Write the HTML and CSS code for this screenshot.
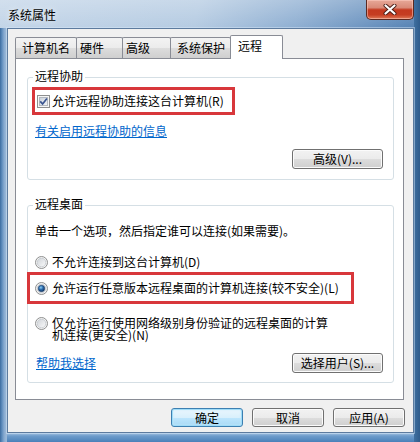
FILE: index.html
```html
<!DOCTYPE html>
<html lang="zh-CN">
<head>
<meta charset="utf-8">
<title>系统属性</title>
<link rel="stylesheet" href="styles.css">
</head>
<body>
<div class="window">
  <div class="titlebar">
    <span class="title">系统属性</span>
    <div class="close">
      <svg width="14" height="11" viewBox="0 0 14 11">
        <path d="M2.5 1.5 L11.5 9.5 M11.5 1.5 L2.5 9.5" stroke="#4a1c14" stroke-width="4" stroke-linecap="round" fill="none"/>
        <path d="M2.5 1.5 L11.5 9.5 M11.5 1.5 L2.5 9.5" stroke="#ffffff" stroke-width="2.2" stroke-linecap="round" fill="none"/>
      </svg>
    </div>
  </div>
  <div class="client">
    <div class="tabs">
      <div class="tab t1">计算机名</div>
      <div class="tab t2">硬件</div>
      <div class="tab t3">高级</div>
      <div class="tab t4">系统保护</div>
      <div class="tab t5 active">远程</div>
    </div>
    <div class="panel">
      <div class="group g1">
        <div class="legend">远程协助</div>
        <div class="mark mark1">
          <svg class="cb" width="13" height="13" viewBox="0 0 13 13">
            <defs>
              <linearGradient id="cbg" x1="0" y1="0" x2="1" y2="1">
                <stop offset="0" stop-color="#c9d0da"/>
                <stop offset="1" stop-color="#f4f6f8"/>
              </linearGradient>
            </defs>
            <rect x="0.5" y="0.5" width="12" height="12" fill="#f6f6f6" stroke="#8e8f8f"/>
            <rect x="2.5" y="2.5" width="8" height="8" fill="url(#cbg)" stroke="#b3b8bf"/>
            <path d="M3.2 6.4 L5.6 8.9 L9.9 3.4" fill="none" stroke="#3b5590" stroke-width="1.7"/>
          </svg>
          <span class="label">允许远程协助连接这台计算机(R)</span>
        </div>
        <a class="link link1" href="#">有关启用远程协助的信息</a>
        <div class="btn btn-side btn-adv">高级(V)...</div>
      </div>
      <div class="group g2">
        <div class="legend">远程桌面</div>
        <div class="desc">单击一个选项，然后指定谁可以连接(如果需要)。</div>
        <div class="opt opt1">
          <svg class="rd" width="13" height="13" viewBox="0 0 13 13">
            <defs>
              <linearGradient id="rg1" x1="0" y1="0" x2="1" y2="1">
                <stop offset="0" stop-color="#cfd3d8"/>
                <stop offset="1" stop-color="#fbfbfb"/>
              </linearGradient>
            </defs>
            <circle cx="6.5" cy="6.5" r="6" fill="#f4f4f4" stroke="#8e8f8f"/>
            <circle cx="6.5" cy="6.5" r="4.3" fill="url(#rg1)" stroke="#c2c6cb" stroke-width="0.8"/>
          </svg>
          <span class="label">不允许连接到这台计算机(D)</span>
        </div>
        <div class="mark mark2">
          <svg class="rd" width="13" height="13" viewBox="0 0 13 13">
            <defs>
              <linearGradient id="rg2" x1="0" y1="0" x2="1" y2="1">
                <stop offset="0" stop-color="#cfd3d8"/>
                <stop offset="1" stop-color="#fbfbfb"/>
              </linearGradient>
              <radialGradient id="dot" cx="0.4" cy="0.35" r="0.7">
                <stop offset="0" stop-color="#8fd0f5"/>
                <stop offset="0.45" stop-color="#2f6fb0"/>
                <stop offset="1" stop-color="#0e2f5c"/>
              </radialGradient>
            </defs>
            <circle cx="6.5" cy="6.5" r="6" fill="#f4f4f4" stroke="#8e8f8f"/>
            <circle cx="6.5" cy="6.5" r="4.3" fill="url(#rg2)" stroke="#c2c6cb" stroke-width="0.8"/>
            <circle cx="6.5" cy="6.5" r="3.2" fill="url(#dot)" stroke="#1b3e6a" stroke-width="0.6"/>
          </svg>
          <span class="label">允许运行任意版本远程桌面的计算机连接(较不安全)(L)</span>
        </div>
        <div class="opt opt3">
          <svg class="rd" width="13" height="13" viewBox="0 0 13 13">
            <defs>
              <linearGradient id="rg3" x1="0" y1="0" x2="1" y2="1">
                <stop offset="0" stop-color="#cfd3d8"/>
                <stop offset="1" stop-color="#fbfbfb"/>
              </linearGradient>
            </defs>
            <circle cx="6.5" cy="6.5" r="6" fill="#f4f4f4" stroke="#8e8f8f"/>
            <circle cx="6.5" cy="6.5" r="4.3" fill="url(#rg3)" stroke="#c2c6cb" stroke-width="0.8"/>
          </svg>
          <span class="label wrap">仅允许运行使用网络级别身份验证的远程桌面的计算机连接(更安全)(N)</span>
        </div>
        <div class="bottomrow">
          <a class="link link2" href="#">帮助我选择</a>
          <div class="btn btn-side btn-users">选择用户(S)...</div>
        </div>
      </div>
    </div>
    <div class="footer">
      <div class="btn btn-foot btn-default">确定</div>
      <div class="btn btn-foot">取消</div>
      <div class="btn btn-foot">应用(A)</div>
    </div>
  </div>
</div>
</body>
</html>
```
FILE: styles.css
```css
html, body {
  margin: 0;
  padding: 0;
}

body {
  font-family: "Noto Sans CJK SC", "Noto Sans", sans-serif;
  font-size: 12px;
  color: #000;
  width: 420px;
  height: 442px;
  overflow: hidden;
}

.window {
  box-sizing: border-box;
  width: 420px;
  height: 442px;
  padding: 0 6px 9px 7px;
  display: flex;
  flex-direction: column;
  background:
    linear-gradient(90deg, #3c6c9f 0, #5f8dbd 2px, #86a9cf 4px, #9ab8d8 6px, #9ab8d8 7px) 0 28px / 7px 100% no-repeat,
    linear-gradient(90deg, #3f6f9f 0, #2f5c8c 100%) 100% 0 / 6px 100% no-repeat,
    linear-gradient(180deg, #a6c3e1 0, #6e9ccb 3px, #4a80b9 100%) 0 100% / 100% 9px no-repeat,
    linear-gradient(180deg, rgba(255,255,255,0.25) 0, rgba(255,255,255,0) 28px),
    linear-gradient(100deg, #c3d5e8 0%, #b5cbe2 40%, #8fafd2 60%, #5a86b7 82%, #3d6b9d 100%);
}

.titlebar {
  height: 28px;
  display: flex;
  align-items: flex-start;
}

.title {
  margin: 8px 0 0 1px;
  line-height: 14px;
  font-size: 12px;
  color: #000;
  text-shadow: 0 0 6px rgba(255, 255, 255, 0.9);
}

.close {
  margin-left: auto;
  box-sizing: border-box;
  width: 48px;
  height: 20px;
  border: 1px solid #5b2a22;
  border-top: none;
  border-radius: 0 0 5px 5px;
  background: linear-gradient(180deg, #e7a898 0%, #d98a78 40%, #c4391f 52%, #c53d22 78%, #df7a57 100%);
  box-shadow: inset 0 0 0 1px rgba(255, 210, 200, 0.5);
  display: flex;
  align-items: center;
  justify-content: center;
}

.close svg {
  display: block;
  margin-top: -1px;
}

.client {
  flex: 1;
  border: 1px solid #5d7b9e;
  background: #f0f0f0;
  padding: 6px 8px 5px 7px;
  display: flex;
  flex-direction: column;
  box-shadow: 0 0 0 1px rgba(220, 235, 250, 0.45);
}

/* Tabs */
.tabs {
  display: flex;
  align-items: flex-end;
  height: 23px;
}

.tab {
  box-sizing: border-box;
  height: 21px;
  border: 1px solid #898c95;
  border-bottom: none;
  border-radius: 2px 2px 0 0;
  margin-left: -1px;
  padding-top: 3px;
  line-height: 14px;
  white-space: nowrap;
  background: linear-gradient(180deg, #f3f3f3 0%, #ebebeb 50%, #dddddd 50%, #cfcfcf 100%);
}

.t1 { margin-left: 0; width: 62px; padding-left: 6px; }
.t2 { width: 47px; padding-left: 3px; }
.t3 { width: 49px; padding-left: 3px; }
.t4 { width: 61px; padding-left: 6px; }
.t5 { width: 53px; padding-left: 7px; }

.tab.active {
  height: 24px;
  margin-bottom: -1px;
  background: #fff;
  position: relative;
  z-index: 1;
}

/* Panel */
.panel {
  box-sizing: border-box;
  width: 389px;
  height: 342px;
  border: 1px solid #898c95;
  background: #fff;
  padding: 18px 9px 0 11px;
}

.group {
  box-sizing: border-box;
  border: 1px solid #d5dfe5;
  border-radius: 3px;
  padding: 0 0 0 7px;
  display: flex;
  flex-direction: column;
  align-items: flex-start;
}

.g1 { height: 103px; }
.g2 { height: 178px; margin-top: 25px; }

.legend {
  background: #fff;
  padding: 0 2px;
  margin: -9px 0 0 -2px;
  line-height: 14px;
  white-space: nowrap;
}

.label {
  line-height: 14px;
  white-space: nowrap;
}

.mark {
  box-sizing: border-box;
  border: 3px solid #d8373b;
  display: flex;
  align-items: center;
}

.mark1 {
  width: 203px;
  height: 28px;
  margin: 4px 0 0 -3px;
  padding-left: 2px;
}

.mark1 .label { margin-left: 2px; }

.cb, .rd {
  display: block;
  flex: none;
}

.link {
  display: block;
  color: #0066cc;
  text-decoration: underline;
  line-height: 14px;
  white-space: nowrap;
}

.link1 { margin-top: 9px; }

.btn {
  box-sizing: border-box;
  border: 1px solid #707070;
  border-radius: 3px;
  background: linear-gradient(180deg, #f2f2f2 0%, #ebebeb 50%, #dddddd 50%, #cfcfcf 100%);
  box-shadow: inset 0 0 0 1px #fbfbfb;
  text-align: center;
  white-space: nowrap;
  color: #000;
}

.btn-side {
  width: 91px;
  height: 20px;
  line-height: 18px;
}

.btn-adv {
  align-self: flex-end;
  margin: 11px 10px 0 0;
}

.desc {
  margin-top: 13px;
  line-height: 14px;
  white-space: nowrap;
}

.opt {
  display: flex;
}

.opt1 {
  margin-top: 17px;
  align-items: center;
}

.opt .label { margin-left: 4px; }

.mark2 {
  width: 327px;
  height: 32px;
  margin: 3px 0 0 -8px;
  padding-left: 5px;
}

.mark2 .label { margin-left: 4px; }

.opt3 {
  margin-top: 13px;
  align-items: flex-start;
}

.opt3 .label.wrap {
  white-space: normal;
  width: 280px;
  line-height: 12px;
}

.bottomrow {
  align-self: stretch;
  margin-top: 12px;
  display: flex;
  align-items: center;
  justify-content: space-between;
}

.link2 { margin-left: 1px; }

.btn-users { margin-right: 10px; }

/* Footer */
.footer {
  margin-top: 8px;
  display: flex;
  justify-content: flex-end;
  gap: 9px;
}

.btn-foot {
  width: 72px;
  height: 19px;
  line-height: 17px;
}

.btn-default {
  border-color: #3c7fb1;
  background: linear-gradient(180deg, #eaf6fd 0%, #d9f0fc 50%, #bee6fd 50%, #a7d9f5 100%);
  box-shadow: inset 0 0 0 1px #9fdcf8, inset 0 0 2px 1px #c8ecfc;
}
```
